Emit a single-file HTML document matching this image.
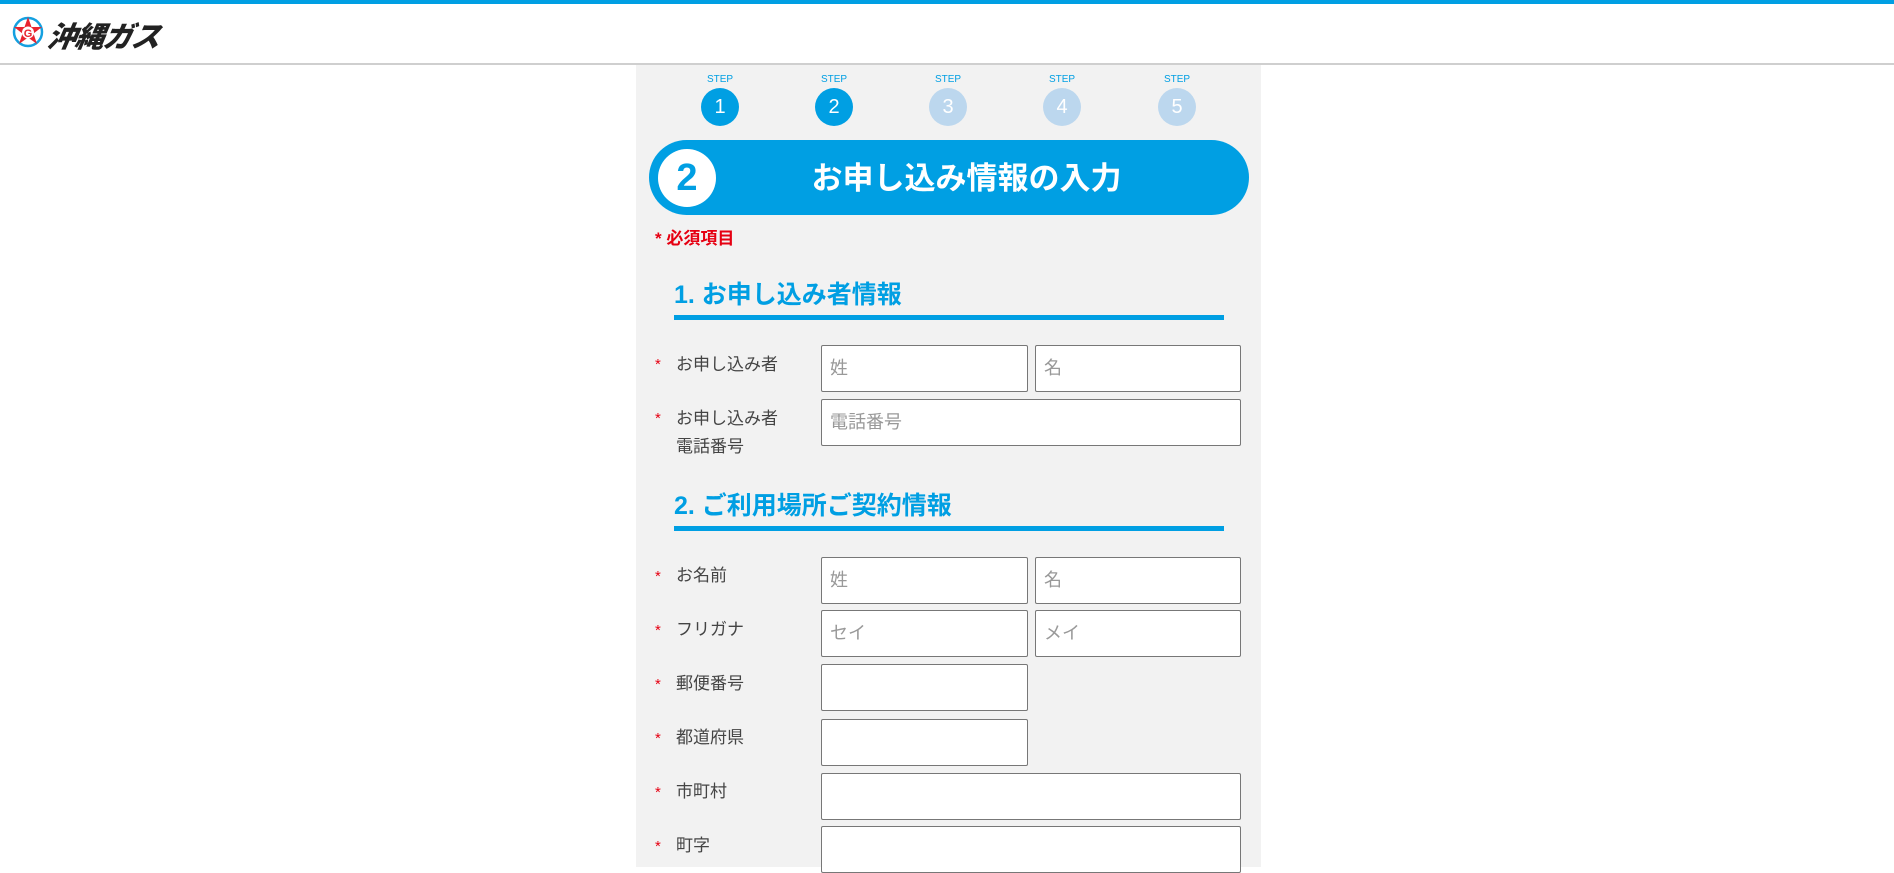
<!DOCTYPE html>
<html><head><meta charset="utf-8"><style>
*{box-sizing:border-box;margin:0;padding:0}
body{width:1894px;height:867px;overflow:hidden;background:#fff;font-family:"Liberation Sans","Noto Sans CJK JP",sans-serif;position:relative}
.abs{position:absolute}
.top{left:0;top:0;width:1894px;height:4px;background:#009fe3}
.hline{left:0;top:63px;width:1894px;height:2px;background:#cfcfcf}
.panel{left:636px;top:65px;width:625px;height:802px;background:#f2f2f2}
.step{width:38px;text-align:center}
.step .l{font-size:10px;color:#009fe3;line-height:12px}
.step .c{width:38px;height:38px;border-radius:50%;color:#fff;font-size:20px;line-height:38px;margin-top:2px}
.banner{left:649px;top:140px;width:600px;height:75px;border-radius:38px;background:#009fe3}
.bc{left:658px;top:149px;width:58px;height:58px;border-radius:50%;background:#fff;color:#009fe3;font-weight:bold;font-size:38px;text-align:center;line-height:58px}
.bt{left:700px;top:141px;width:533px;height:75px;line-height:75px;text-align:center;color:#fff;font-weight:bold;font-size:31px}
.req{left:655px;top:224px;color:#e60012;font-weight:bold;font-size:17px}
.h{left:674px;color:#009fe3;font-size:25px;font-weight:bold;line-height:30px}
.ul{left:674px;width:550px;height:5px;background:#009fe3}
.ast{left:655px;color:#e60012;font-size:15px}
.lab{left:676px;color:#444;font-size:17px;line-height:28px}
.in{background:#fff;border:1px solid #777;border-radius:2px;height:47px;color:#999;font-size:18px;padding-left:8px;line-height:45px}
</style></head><body>
<div class="abs top"></div>
<div class="abs" style="left:12px;top:16px">
<svg width="32" height="32" viewBox="0 0 32 32"><circle cx="16" cy="16" r="14" fill="none" stroke="#14a0e0" stroke-width="2.5"/><polygon points="16,1 19.5,11 30,11 21.5,17.5 25,28 16,21.5 7,28 10.5,17.5 2,11 12.5,11" fill="#e8242f"/><circle cx="16" cy="16.5" r="6" fill="#fff"/><text x="16" y="21" text-anchor="middle" font-size="11" font-weight="bold" fill="#e8242f" font-family="Liberation Sans">G</text></svg>
</div>
<div class="abs" style="left:48px;top:14px;font-size:29px;font-weight:900;font-style:italic;color:#222;letter-spacing:-1px;transform:skewX(-10deg)">沖縄ガス</div>
<div class="abs hline"></div>
<div class="abs panel"></div>
<div class="abs step" style="left:701px;top:74px"><div class="l">STEP</div><div class="c" style="background:#009fe3">1</div></div>
<div class="abs step" style="left:815px;top:74px"><div class="l">STEP</div><div class="c" style="background:#009fe3">2</div></div>
<div class="abs step" style="left:929px;top:74px"><div class="l">STEP</div><div class="c" style="background:#bcd7ee">3</div></div>
<div class="abs step" style="left:1043px;top:74px"><div class="l">STEP</div><div class="c" style="background:#bcd7ee">4</div></div>
<div class="abs step" style="left:1158px;top:74px"><div class="l">STEP</div><div class="c" style="background:#bcd7ee">5</div></div>
<div class="abs banner"></div>
<div class="abs bc">2</div>
<div class="abs bt">お申し込み情報の入力</div>
<div class="abs req">* 必須項目</div>
<div class="abs h" style="top:280px">1. お申し込み者情報</div>
<div class="abs ul" style="top:315px"></div>
<div class="abs h" style="top:491px">2. ご利用場所ご契約情報</div>
<div class="abs ul" style="top:526px"></div>

<div class="abs ast" style="top:356px">*</div><div class="abs lab" style="top:351px">お申し込み者</div>
<div class="abs in" style="left:821px;top:345px;width:207px">姓</div>
<div class="abs in" style="left:1035px;top:345px;width:206px">名</div>

<div class="abs ast" style="top:410px">*</div><div class="abs lab" style="top:405px">お申し込み者<br>電話番号</div>
<div class="abs in" style="left:821px;top:399px;width:420px">電話番号</div>

<div class="abs ast" style="top:568px">*</div><div class="abs lab" style="top:562px">お名前</div>
<div class="abs in" style="left:821px;top:557px;width:207px">姓</div>
<div class="abs in" style="left:1035px;top:557px;width:206px">名</div>

<div class="abs ast" style="top:622px">*</div><div class="abs lab" style="top:616px">フリガナ</div>
<div class="abs in" style="left:821px;top:610px;width:207px">セイ</div>
<div class="abs in" style="left:1035px;top:610px;width:206px">メイ</div>

<div class="abs ast" style="top:676px">*</div><div class="abs lab" style="top:670px">郵便番号</div>
<div class="abs in" style="left:821px;top:664px;width:207px"></div>

<div class="abs ast" style="top:730px">*</div><div class="abs lab" style="top:724px">都道府県</div>
<div class="abs in" style="left:821px;top:719px;width:207px"></div>

<div class="abs ast" style="top:784px">*</div><div class="abs lab" style="top:778px">市町村</div>
<div class="abs in" style="left:821px;top:773px;width:420px"></div>

<div class="abs ast" style="top:838px">*</div><div class="abs lab" style="top:832px">町字</div>
<div class="abs in" style="left:821px;top:826px;width:420px"></div>
</body></html>
